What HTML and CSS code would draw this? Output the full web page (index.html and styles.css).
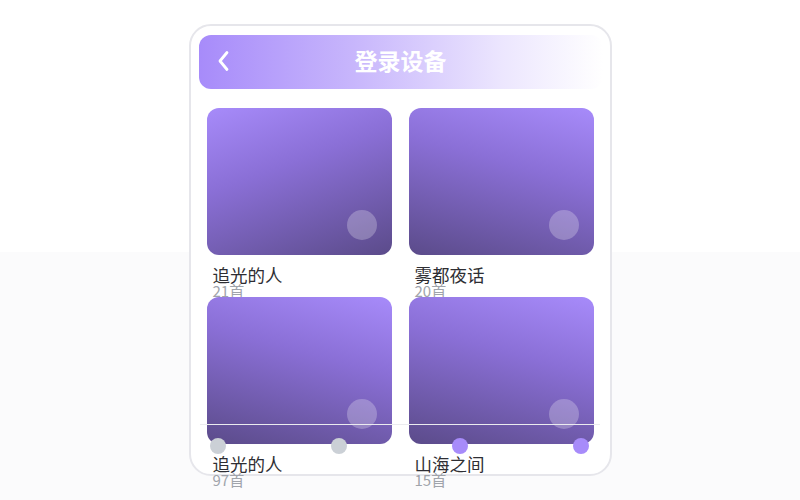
FILE: index.html
```html
<!DOCTYPE html>
<html lang="zh-CN">

<head>
    <meta charset="UTF-8">
    <meta name="viewport" content="width=device-width, initial-scale=1.0">
    <title>登录设备</title>
    <link rel="stylesheet" href="styles.css">
</head>

<body>
    <div class="phone">
        <div class="header">
            <span class="back">
                <svg width="14" height="22" viewBox="0 0 14 22">
                    <path d="M10 2.5 L3 11 L10 19.5" fill="none" stroke="#fff" stroke-width="2.8" stroke-linecap="round" stroke-linejoin="round" />
                </svg>
            </span>
            <h1>登录设备</h1>
        </div>

        <div class="grid">
            <div class="item">
                <div class="cover cover-left"><span class="play"></span></div>
                <div class="name">追光的人</div>
                <div class="count">21首</div>
            </div>
            <div class="item">
                <div class="cover"><span class="play"></span></div>
                <div class="name">雾都夜话</div>
                <div class="count">20首</div>
            </div>
            <div class="item">
                <div class="cover"><span class="play"></span></div>
                <div class="name">追光的人</div>
                <div class="count">97首</div>
            </div>
            <div class="item">
                <div class="cover"><span class="play"></span></div>
                <div class="name">山海之间</div>
                <div class="count">15首</div>
            </div>
        </div>

        <!-- progress track -->
        <div class="track"></div>
        <div class="dots">
            <span class="dot"></span>
            <span class="dot"></span>
            <span class="dot on"></span>
            <span class="dot on"></span>
        </div>
    </div>
</body>

</html>
```

FILE: styles.css
```css
body {
    margin: 0;
    height: 500px;
    font-family: 'Noto Sans CJK SC', 'Noto Sans', sans-serif;
    background: linear-gradient(to bottom, #ffffff 252px, #fbfbfc 252px);
    padding-top: 24px;
    box-sizing: border-box;
}

.phone {
    position: relative;
    width: 423px;
    height: 452px;
    margin: 0 auto;
    padding: 9px 8px 0;
    box-sizing: border-box;
    border: 2px solid #e6e6eb;
    border-radius: 22px;
    background: #fff;
}

.header {
    position: relative;
    height: 54px;
    margin-right: -1px;
    border-radius: 12px;
    background: linear-gradient(to right, #a78bfa 0%, #c9b8fc 40%, #ece6fe 75%, #ffffff 100%);
    display: flex;
    align-items: center;
    justify-content: center;
}

.back {
    position: absolute;
    left: 18px;
    top: 15px;
    display: flex;
}

h1 {
    margin: 0 0 4px;
    color: #fff;
    font-size: 23px;
    font-weight: 700;
}

.grid {
    display: grid;
    grid-template-columns: 185px 185px;
    column-gap: 17px;
    padding: 19px 8px 0;
}

.item {
    height: 189px;
}

.cover {
    position: relative;
    height: 147px;
    border-radius: 12px;
    background: linear-gradient(195deg, #a78bfa 0%, #8a6fd6 40%, #5b4b8a 100%);
}

.cover-left {
    background: linear-gradient(160deg, #a78bfa 0%, #8a6fd6 40%, #5b4b8a 100%);
}

.play {
    position: absolute;
    right: 15px;
    bottom: 15px;
    width: 30px;
    height: 30px;
    border-radius: 50%;
    background: rgba(255, 255, 255, 0.25);
}

.name {
    margin-top: 9px;
    padding-left: 6px;
    font-size: 17.5px;
    line-height: 22px;
    color: #2e2e33;
}

.count {
    padding-left: 6px;
    font-size: 15px;
    line-height: 10px;
    color: #a0a4ab;
}

.track {
    position: absolute;
    left: 9px;
    top: 398px;
    width: 400px;
    height: 1px;
    background: #ebebef;
}

.dots {
    position: absolute;
    left: 19px;
    top: 412px;
    width: 380px;
    display: flex;
    justify-content: space-between;
}

.dot {
    width: 16px;
    height: 16px;
    border-radius: 50%;
    background: #cbd0d6;
}

.dot.on {
    background: #a78bfa;
}
```
